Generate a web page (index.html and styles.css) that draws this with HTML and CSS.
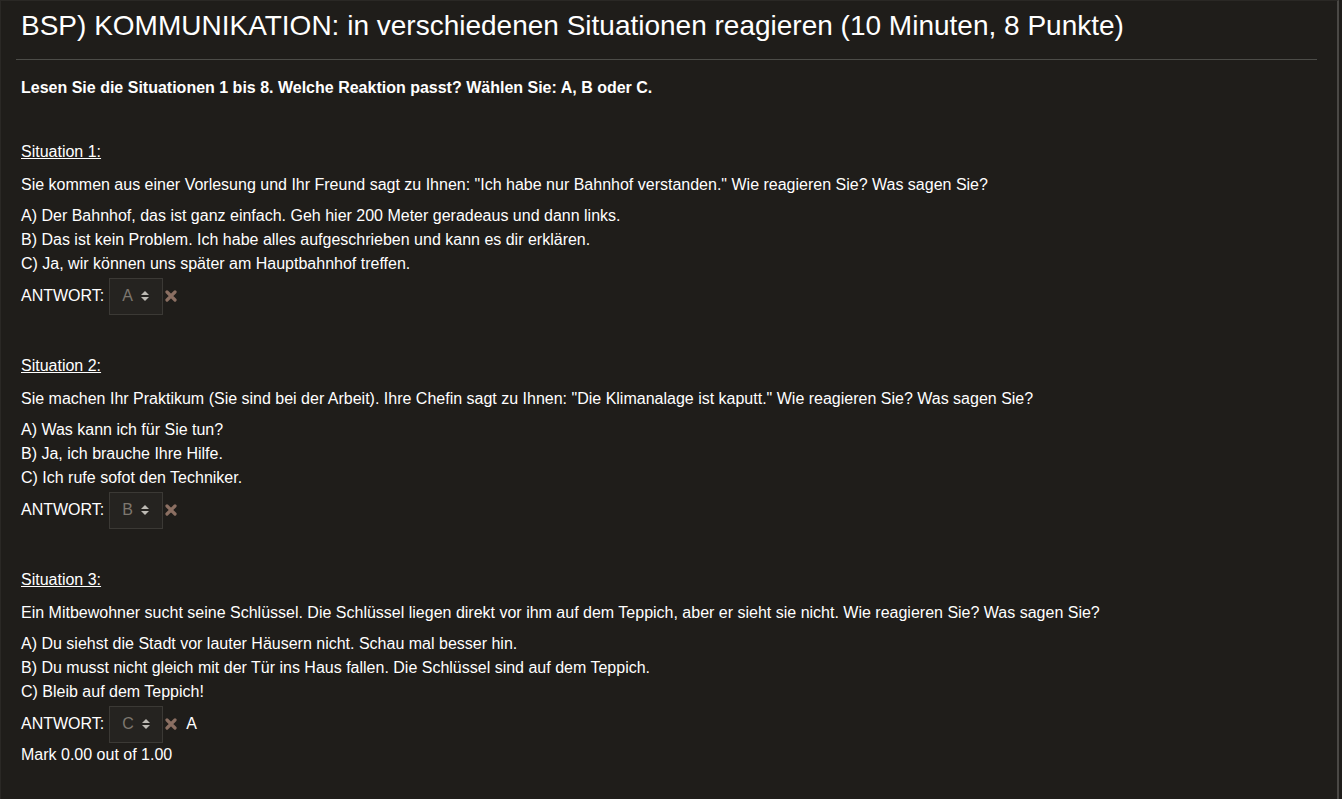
FILE: index.html
```html
<!DOCTYPE html>
<html lang="de">
<head>
<meta charset="utf-8">
<title>Kommunikation</title>
<link rel="stylesheet" href="styles.css">
</head>
<body>
<div class="frame">
  <div class="content">
    <h2 class="title">BSP) KOMMUNIKATION: in verschiedenen Situationen reagieren (10 Minuten, 8 Punkte)</h2>
    <hr class="rule">
    <p class="instr">Lesen Sie die Situationen 1 bis 8. Welche Reaktion passt? Wählen Sie: A, B oder C.</p>

    <section class="situation">
      <p class="sit-head">Situation 1:</p>
      <p class="sit-desc">Sie kommen aus einer Vorlesung und Ihr Freund sagt zu Ihnen: "Ich habe nur Bahnhof verstanden." Wie reagieren Sie? Was sagen Sie?</p>
      <div class="options">
        <div>A) Der Bahnhof, das ist ganz einfach. Geh hier 200 Meter geradeaus und dann links.</div>
        <div>B) Das ist kein Problem. Ich habe alles aufgeschrieben und kann es dir erklären.</div>
        <div>C) Ja, wir können uns später am Hauptbahnhof treffen.</div>
      </div>
      <div class="answer">
        <span class="label">ANTWORT:</span>
        <span class="select">A <svg class="arrows" width="8" height="10" viewBox="0 0 8 10"><path d="M4 0 L8 4 H0 Z M4 10 L8 6 H0 Z" fill="#bdbab4"/></svg></span>
        <svg class="cross" width="12" height="12" viewBox="0 0 12 12"><path d="M2 2 L10 10 M10 2 L2 10" stroke="#8b6f62" stroke-width="3.2" stroke-linecap="round"/></svg>
      </div>
    </section>

    <section class="situation">
      <p class="sit-head">Situation 2:</p>
      <p class="sit-desc">Sie machen Ihr Praktikum (Sie sind bei der Arbeit). Ihre Chefin sagt zu Ihnen: "Die Klimanalage ist kaputt." Wie reagieren Sie? Was sagen Sie?</p>
      <div class="options">
        <div>A) Was kann ich für Sie tun?</div>
        <div>B) Ja, ich brauche Ihre Hilfe.</div>
        <div>C) Ich rufe sofot den Techniker.</div>
      </div>
      <div class="answer">
        <span class="label">ANTWORT:</span>
        <span class="select">B <svg class="arrows" width="8" height="10" viewBox="0 0 8 10"><path d="M4 0 L8 4 H0 Z M4 10 L8 6 H0 Z" fill="#bdbab4"/></svg></span>
        <svg class="cross" width="12" height="12" viewBox="0 0 12 12"><path d="M2 2 L10 10 M10 2 L2 10" stroke="#8b6f62" stroke-width="3.2" stroke-linecap="round"/></svg>
      </div>
    </section>

    <section class="situation">
      <p class="sit-head">Situation 3:</p>
      <p class="sit-desc">Ein Mitbewohner sucht seine Schlüssel. Die Schlüssel liegen direkt vor ihm auf dem Teppich, aber er sieht sie nicht. Wie reagieren Sie? Was sagen Sie?</p>
      <div class="options">
        <div>A) Du siehst die Stadt vor lauter Häusern nicht. Schau mal besser hin.</div>
        <div>B) Du musst nicht gleich mit der Tür ins Haus fallen. Die Schlüssel sind auf dem Teppich.</div>
        <div>C) Bleib auf dem Teppich!</div>
      </div>
      <div class="answer">
        <span class="label">ANTWORT:</span>
        <span class="select">C <svg class="arrows" width="8" height="10" viewBox="0 0 8 10"><path d="M4 0 L8 4 H0 Z M4 10 L8 6 H0 Z" fill="#bdbab4"/></svg></span>
        <svg class="cross" width="12" height="12" viewBox="0 0 12 12"><path d="M2 2 L10 10 M10 2 L2 10" stroke="#8b6f62" stroke-width="3.2" stroke-linecap="round"/></svg>
        <span class="correct">A</span>
      </div>
      <p class="mark">Mark 0.00 out of 1.00</p>
    </section>
  </div>
</div>
</body>
</html>
```

FILE: styles.css
```css
html, body {
  margin: 0;
  padding: 0;
  background: #1f1d1a;
  height: 100%;
}
body {
  font-family: "Liberation Sans", Arial, sans-serif;
  color: #ffffff;
  font-size: 16px;
}
.frame {
  box-sizing: border-box;
  min-height: 799px;
  width: 1339px;
  border-left: 1px solid #2a2825;
  border-top: 1px solid #2a2825;
  border-right: 2px solid #4a4845;
  overflow: hidden;
}
.content {
  padding: 0 20px 0 20px;
}
.title {
  font-weight: normal;
  font-size: 28px;
  line-height: 32px;
  margin: 9px 0 0 0;
}
.rule {
  border: 0;
  border-top: 1px solid #4c4c48;
  margin: 17px 0 0 -5px;
  width: 1301px;
}
.instr {
  font-weight: bold;
  font-size: 16px;
  margin: 19px 0 0 0;
  line-height: 18px;
}
.situation {
  margin-top: 45px;
}
.situation + .situation {
  margin-top: 41px;
}
.sit-head {
  text-decoration: underline;
  margin: 0;
  line-height: 20px;
}
.sit-desc {
  margin: 13px 0 0 0;
  line-height: 20px;
}
.options {
  margin-top: 9px;
  line-height: 24px;
}
.answer {
  display: flex;
  align-items: center;
  margin-top: 1px;
  height: 38px;
}
.label {
  margin-right: 5px;
}
.select {
  box-sizing: border-box;
  width: 54px;
  height: 37px;
  border: 1px solid #3b3935;
  background: #252320;
  color: #7d776f;
  display: inline-flex;
  align-items: center;
  padding-left: 12px;
  gap: 8px;
  font-size: 16px;
}
.arrows {
  display: block;
}
.cross {
  margin-left: 2px;
}
.correct {
  margin-left: 9px;
}
.mark {
  margin: 2px 0 0 0;
  line-height: 20px;
}
```
